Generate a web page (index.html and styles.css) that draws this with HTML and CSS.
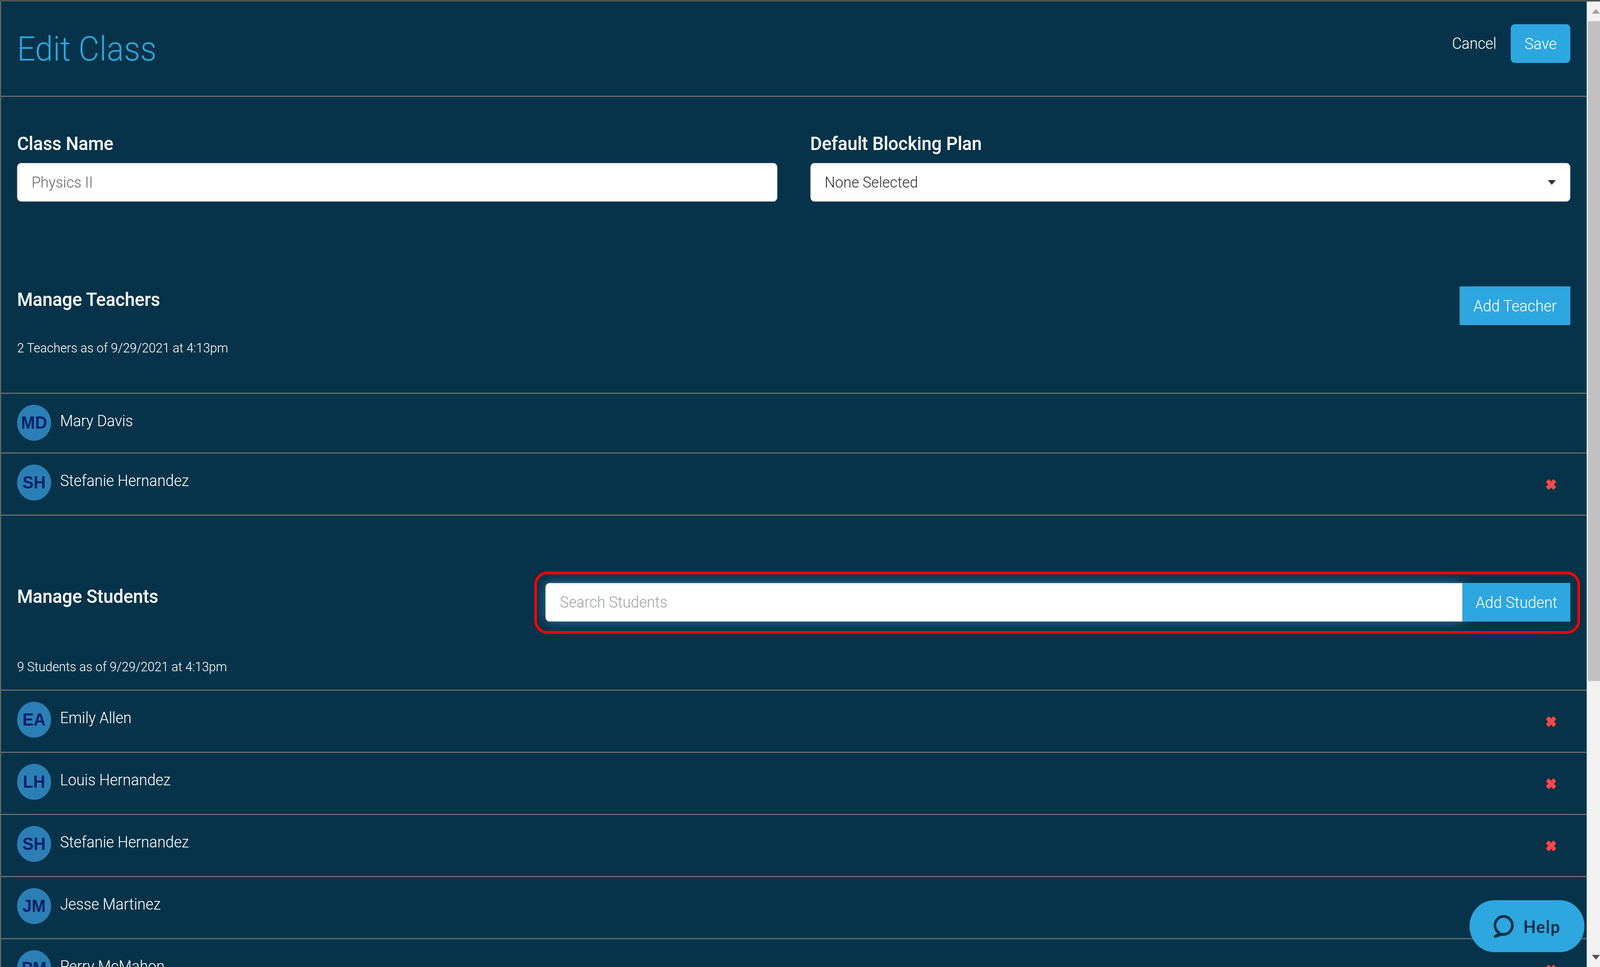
FILE: index.html
```html
<!DOCTYPE html>
<html lang="en">
<head>
<meta charset="utf-8">
<title>Edit Class</title>
<link rel="stylesheet" href="styles.css">
</head>
<body>
<div class="page">
<div class="topbar"></div>
<div class="window">
  <main class="main">
    <header class="header">
      <h1 class="title">Edit Class</h1>
      <div class="actions">
        <a class="cancel">Cancel</a>
        <button class="btn btn-round">Save</button>
      </div>
    </header>

    <section class="form">
      <div class="field">
        <label class="label">Class Name</label>
        <input class="input" type="text" placeholder="Physics II">
      </div>
      <div class="field">
        <label class="label">Default Blocking Plan</label>
        <div class="input select"><span>None Selected</span><i class="caret"></i></div>
      </div>
    </section>

    <section class="head head-teachers">
      <h2 class="heading">Manage Teachers</h2>
      <button class="btn">Add Teacher</button>
    </section>
    <p class="meta meta-teachers">2 Teachers as of 9/29/2021 at 4:13pm</p>

    <ul class="list">
      <li class="row">
        <span class="avatar">MD</span><span class="name">Mary Davis</span>
      </li>
      <li class="row row-removable">
        <span class="avatar">SH</span><span class="name">Stefanie Hernandez</span>
        <svg class="remove" viewBox="0 0 28 28"><rect x="-.5" y="8.500" width="29" height="11" rx="2" transform="rotate(45 14 14)"/><rect x="-.5" y="8.500" width="29" height="11" rx="2" transform="rotate(-45 14 14)"/></svg>
      </li>
    </ul>
    <div class="rule"></div>

    <section class="head head-students">
      <h2 class="heading">Manage Students</h2>
      <div class="search-frame">
        <input class="input search" type="text" placeholder="Search Students">
        <button class="btn btn-attached">Add Student</button>
      </div>
    </section>
    <p class="meta meta-students">9 Students as of 9/29/2021 at 4:13pm</p>

    <ul class="list">
      <li class="row row-removable">
        <span class="avatar">EA</span><span class="name">Emily Allen</span>
        <svg class="remove" viewBox="0 0 28 28"><rect x="-.5" y="8.500" width="29" height="11" rx="2" transform="rotate(45 14 14)"/><rect x="-.5" y="8.500" width="29" height="11" rx="2" transform="rotate(-45 14 14)"/></svg>
      </li>
      <li class="row row-removable">
        <span class="avatar">LH</span><span class="name">Louis Hernandez</span>
        <svg class="remove" viewBox="0 0 28 28"><rect x="-.5" y="8.500" width="29" height="11" rx="2" transform="rotate(45 14 14)"/><rect x="-.5" y="8.500" width="29" height="11" rx="2" transform="rotate(-45 14 14)"/></svg>
      </li>
      <li class="row row-removable">
        <span class="avatar">SH</span><span class="name">Stefanie Hernandez</span>
        <svg class="remove" viewBox="0 0 28 28"><rect x="-.5" y="8.500" width="29" height="11" rx="2" transform="rotate(45 14 14)"/><rect x="-.5" y="8.500" width="29" height="11" rx="2" transform="rotate(-45 14 14)"/></svg>
      </li>
      <li class="row row-removable">
        <span class="avatar">JM</span><span class="name">Jesse Martinez</span>
        <svg class="remove" viewBox="0 0 28 28"><rect x="-.5" y="8.500" width="29" height="11" rx="2" transform="rotate(45 14 14)"/><rect x="-.5" y="8.500" width="29" height="11" rx="2" transform="rotate(-45 14 14)"/></svg>
      </li>
      <li class="row row-last">
        <span class="avatar">PM</span><span class="name">Perry McMahon</span>
        <svg class="remove" viewBox="0 0 28 28"><rect x="-.5" y="8.500" width="29" height="11" rx="2" transform="rotate(45 14 14)"/><rect x="-.5" y="8.500" width="29" height="11" rx="2" transform="rotate(-45 14 14)"/></svg>
      </li>
    </ul>
  </main>

  <aside class="scrollbar">
    <div class="sb-arrow"><i class="tri-up"></i></div>
    <div class="sb-thumb"></div>
    <div class="sb-track"></div>
    <div class="sb-arrow"><i class="tri-down"></i></div>
  </aside>
</div>

<button class="help">
  <svg class="help-icon" viewBox="0 0 54 58" fill="none" stroke="currentColor" stroke-width="7" stroke-linejoin="round">
    <path d="M14.500 45.500C8 41.200 3.500 34.200 3.500 26.500C3.500 13.800 13.800 3.500 27 3.500S50.500 13.800 50.500 26.500S40 49.500 27 49.500C25 49.500 23.800 49 22.500 49C17 51 10 54 4 54.500C9 52 14.500 50 14.500 45.500Z"/>
  </svg>
  <span class="help-text">Help</span>
</button>
</div>
</body>
</html>
```

FILE: styles.css
```css
* { box-sizing: border-box; }

html, body {
  margin: 0;
  height: 100%;
  overflow: hidden;
  background: #063349;
}

.page {
  width: 4318px;
  height: 100%;
  display: flex;
  flex-direction: column;
  position: relative;
  background: #063349;
  color: #fff;
  font-family: Roboto, "Liberation Sans", sans-serif;
  font-weight: 300;
}

@media (max-width: 4317px) {
  .page {
    transform: scaleX(.948587);
    transform-origin: 0 0;
  }
}

.topbar {
  flex: none;
  height: 4px;
  background: #4f5355;
}

.window {
  flex: 1;
  display: flex;
  min-height: 0;
}

.main {
  flex: 1;
  min-width: 0;
  position: relative;
  overflow: hidden;
  background: #063349;
  border-left: 3px solid #666;
}

.main::before {
  content: "";
  position: absolute;
  left: -3px;
  top: 0;
  width: 3px;
  height: 150px;
  background: #071a24;
}

/* header */
.header {
  height: 244px;
  padding: 58px 44px 0 43px;
  display: flex;
  justify-content: space-between;
  align-items: flex-start;
  border-bottom: 3px solid #6b6b6b;
}

.title {
  margin: 13px 0 0;
  font-size: 87px;
  line-height: 100px;
  font-weight: 300;
  color: #2ea6df;
}

.actions {
  display: flex;
  align-items: center;
  gap: 39px;
}

.cancel {
  font-size: 40px;
  line-height: 99px;
}

.btn {
  height: 99px;
  padding: 0 37px;
  border: 0;
  background: #2ea6df;
  color: #fff;
  font-family: inherit;
  font-weight: 300;
  font-size: 41px;
  white-space: nowrap;
}

.btn-round { border-radius: 11px; }

/* form */
.form {
  display: grid;
  grid-template-columns: 1fr 1fr;
  column-gap: 89px;
  padding: 92px 44px 0 43px;
}

.label {
  display: block;
  margin-bottom: 21px;
  font-size: 48.300px;
  line-height: 56px;
  font-weight: 500;
}

.input {
  display: block;
  width: 100%;
  height: 99px;
  padding: 0 38px;
  border: 1px solid #ccc;
  border-radius: 11px;
  background: #fff;
  box-shadow: inset 0 3px 3px rgba(0, 0, 0, .075);
  font-family: inherit;
  font-weight: 300;
  font-size: 39.700px;
  outline: 0;
}

.input::placeholder { color: #666; opacity: 1; }

.select {
  display: flex;
  align-items: center;
  justify-content: space-between;
  color: #333;
}

.caret {
  width: 0;
  height: 0;
  border-left: 11.500px solid transparent;
  border-right: 11.500px solid transparent;
  border-top: 12px solid #333;
}

/* section heads */
.head {
  display: flex;
  justify-content: space-between;
  align-items: flex-start;
  padding: 0 44px 0 43px;
}

.head-teachers { margin-top: 217px; }
.head-students { margin-top: 143px; }

.heading {
  margin: 6px 0 0;
  font-size: 48.500px;
  line-height: 56px;
  font-weight: 500;
}

.head-students .heading { margin-top: 36px; }

.meta {
  margin: 0;
  padding: 0 43px;
  font-size: 33.900px;
  line-height: 50px;
}

.meta-teachers { padding-top: 34px; padding-bottom: 89px; }
.meta-students { padding-top: 60px; padding-bottom: 33px; }

/* rows */
.list {
  margin: 0;
  padding: 0;
  list-style: none;
}

.row {
  display: flex;
  align-items: flex-start;
  min-height: 153px;
  padding: 28px 44px 0 43px;
  border-top: 3px solid #6b6b6b;
}

.row-removable { min-height: 159px; }
.row-last { min-height: 74px; overflow: hidden; }

.rule { border-top: 3px solid #6b6b6b; }

.avatar {
  flex: none;
  width: 92px;
  height: 92px;
  border-radius: 50%;
  background: #2b7fb5;
  color: #0a2068;
  font-family: "Liberation Sans", Arial, sans-serif;
  font-weight: 700;
  font-size: 45px;
  line-height: 92px;
  text-align: center;
}

.name {
  margin-left: 24px;
  font-size: 40.500px;
  line-height: 83px;
}

.remove {
  flex: none;
  width: 28px;
  height: 28px;
  margin: 37px 38px 0 auto;
  fill: #ff4646;
}

/* search with annotation frame */
.search-frame {
  flex: none;
  display: flex;
  width: 2822px;
  height: 159px;
  margin-right: -26px;
  padding: 22px 19px 24px 23px;
  border: 7px solid #f00;
  border-radius: 34px;
}

.search {
  flex: 1;
  min-width: 0;
  font-size: 40.300px;
  border-radius: 11px 0 0 11px;
  box-shadow: inset 0 3px 3px rgba(0, 0, 0, .075), 0 0 32px rgba(82, 168, 236, .55);
}

.search::placeholder { color: #a2a2a2; }

.btn-attached {
  position: relative;
  flex: none;
  width: 291px;
  padding: 0;
  text-align: center;
}

/* scrollbar */
.scrollbar {
  flex: none;
  width: 36px;
  display: flex;
  flex-direction: column;
  background: #f1f1f1;
  border-left: 3px solid #f7f7f7;
}

.sb-arrow {
  flex: none;
  height: 50px;
  display: flex;
  align-items: center;
  justify-content: flex-end;
}

.sb-thumb {
  flex: none;
  height: 1689px;
  background: #c1c1c1;
}

.sb-track { flex: 1; }

.tri-up, .tri-down {
  width: 0;
  height: 0;
  border-left: 11.500px solid transparent;
  border-right: 11.500px solid transparent;
}

.tri-up { border-bottom: 12px solid #a3a3a3; }
.tri-down { border-top: 12px solid #505050; }

/* help */
.help {
  position: absolute;
  left: 3966px;
  top: 2304px;
  width: 310px;
  height: 133px;
  padding: 0 0 0 65px;
  display: flex;
  align-items: center;
  gap: 26px;
  border: 0;
  border-radius: 67px;
  background: #2ea6df;
  color: #0d3044;
}

.help-icon {
  flex: none;
  width: 54px;
  height: 58px;
}

.help-text {
  font-family: Lato, "Noto Sans", sans-serif;
  font-weight: 700;
  font-size: 44px;
  letter-spacing: 2px;
}
```
